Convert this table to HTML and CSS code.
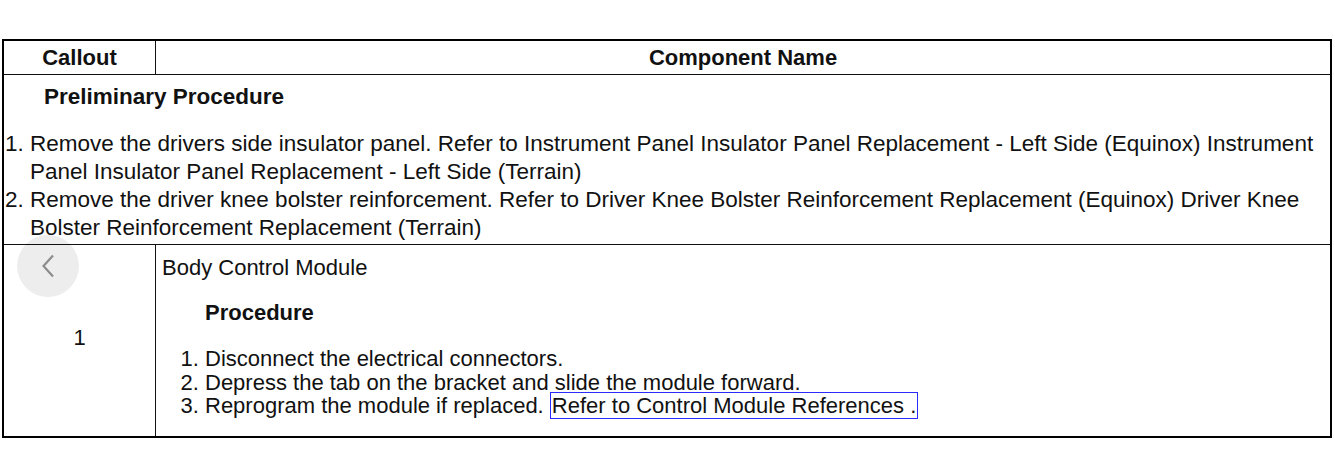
FILE: index.html
```html
<!DOCTYPE html>
<html>
<head>
<meta charset="utf-8">
<link rel="stylesheet" href="styles.css">
</head>
<body>
<div class="page">
  <table class="parts">
    <thead>
      <tr>
        <th class="col-callout">Callout</th>
        <th class="col-name">Component Name</th>
      </tr>
    </thead>
    <tbody>
      <tr>
        <td colspan="2" class="prelim">
          <div class="heading prelim-heading">Preliminary Procedure</div>
          <ol class="steps prelim-steps">
            <li>Remove the drivers side insulator panel. Refer to Instrument Panel Insulator Panel Replacement - Left Side (Equinox) Instrument Panel Insulator Panel Replacement - Left Side (Terrain)</li>
            <li>Remove the driver knee bolster reinforcement. Refer to Driver Knee Bolster Reinforcement Replacement (Equinox) Driver Knee Bolster Reinforcement Replacement (Terrain)</li>
          </ol>
        </td>
      </tr>
      <tr>
        <td class="callout">1</td>
        <td class="component">
          <div class="comp-title">Body Control Module</div>
          <div class="heading proc-heading">Procedure</div>
          <ol class="steps proc-steps">
            <li>Disconnect the electrical connectors.</li>
            <li>Depress the tab on the bracket and slide the module forward.</li>
            <li>Reprogram the module if replaced. <a class="ref" href="#">Refer to Control Module References .</a></li>
          </ol>
        </td>
      </tr>
    </tbody>
  </table>
  <button class="nav-prev" aria-label="Previous">
    <svg width="14" height="24" viewBox="0 0 14 24"><path d="M12 1.5 L2.5 12 L12 22.5" fill="none" stroke="#8c8c8c" stroke-width="2.2"/></svg>
  </button>
</div>
</body>
</html>
```

FILE: styles.css
```css
html, body {
  margin: 0;
  padding: 0;
  background: #fff;
}
body {
  font-family: "Liberation Sans", Arial, Helvetica, sans-serif;
  font-size: 22px;
  color: #111;
}
.page {
  position: relative;
  padding: 39px 3px 0 2px;
}
.parts {
  border-collapse: collapse;
  width: 1330px;
  border: 2px solid #000;
}
.parts th,
.parts td {
  border: 1px solid #111;
  padding: 0;
}
.parts th {
  height: 33px;
  font-weight: bold;
  text-align: center;
  vertical-align: middle;
  line-height: 24px;
}
.col-callout {
  width: 151px;
}
.prelim {
  vertical-align: top;
  font-size: 22.5px;
}
.heading {
  font-weight: bold;
}
.prelim-heading {
  padding: 10px 0 0 40px;
  line-height: 24px;
}
.steps {
  margin: 0;
  line-height: 23.5px;
}
.prelim-steps {
  line-height: 28px;
  padding: 21px 6px 2px 26px;
}
.callout {
  text-align: center;
  vertical-align: middle;
  padding-bottom: 4px !important;
}
.component {
  vertical-align: top;
  padding: 11px 0 18px 6px !important;
}
.comp-title {
  line-height: 24px;
}
.proc-heading {
  padding: 21px 0 0 43px;
  line-height: 24px;
}
.proc-steps {
  padding: 22px 0 0 43px;
}
.ref {
  color: #111;
  text-decoration: none;
  border: 1px solid #2b2bff;
  padding: 0 1px;
}
.nav-prev {
  position: absolute;
  left: 17px;
  top: 235px;
  width: 62px;
  height: 62px;
  border-radius: 50%;
  border: none;
  background: rgba(0, 0, 0, 0.07);
  display: flex;
  align-items: center;
  justify-content: center;
  padding: 0;
}
```
